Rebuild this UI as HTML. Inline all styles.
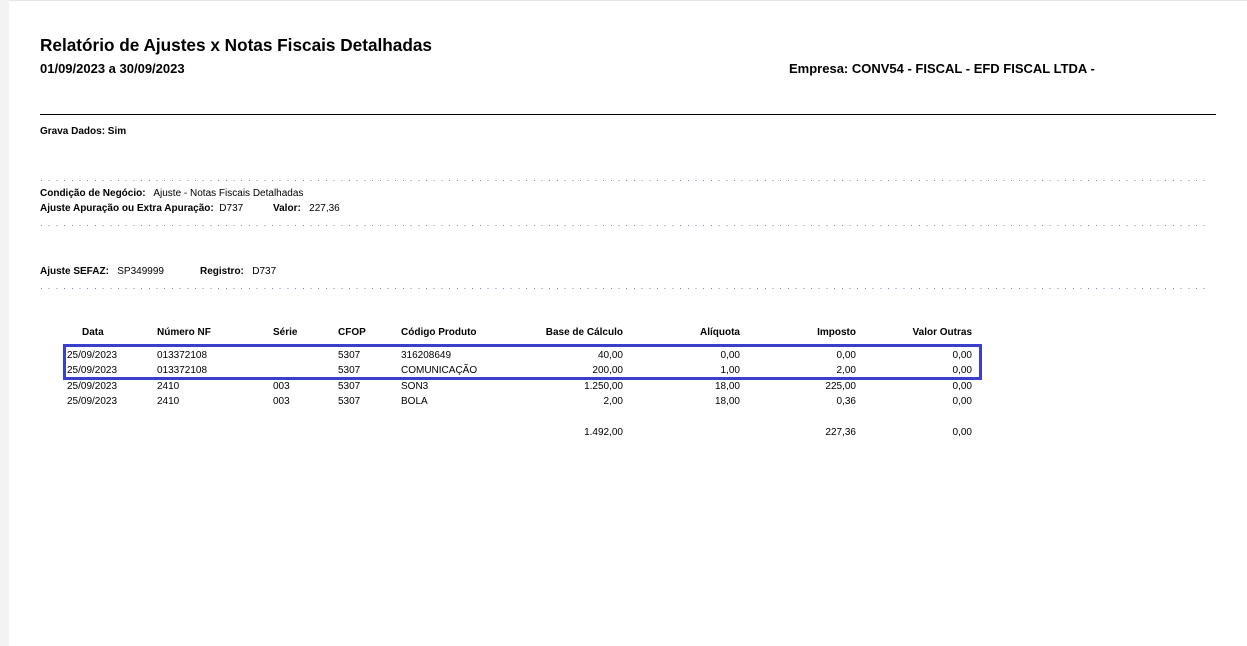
<!DOCTYPE html><html><head><meta charset="utf-8"><style>
body{margin:0;width:1247px;height:646px;background:#fff;font-family:"Liberation Sans",sans-serif;color:#000;position:relative;overflow:hidden}
.strip{position:absolute;left:0;top:0;width:9px;height:646px;background:#f3f3f3}
.a{position:absolute;white-space:nowrap;font-size:10px}
.b{font-weight:bold}
.dots{position:absolute;left:41px;width:1170px;height:1px;background-image:repeating-linear-gradient(90deg,#7b8fb8 0 1px,transparent 1px 7.7px)}
.r{text-align:right}
</style></head><body>
<div class="strip"></div>
<div style="position:absolute;left:9px;top:0;width:1238px;height:1px;background:#e6e6e6"></div>
<div class="a b" style="left:40px;top:35px;font-size:17.2px">Relatório de Ajustes x Notas Fiscais Detalhadas</div>
<div class="a b" style="left:40px;top:61px;font-size:13px">01/09/2023 a 30/09/2023</div>
<div class="a b" style="left:789px;top:61px;font-size:13px">Empresa: CONV54 - FISCAL - EFD FISCAL LTDA -</div>
<div style="position:absolute;left:40px;top:114px;width:1176px;height:1px;background:#000"></div>
<div class="a b" style="left:40px;top:126px">Grava Dados: Sim</div>
<div class="dots" style="top:180px"></div>
<div class="a" style="left:40px;top:188px"><b>Condição de Negócio:</b>&nbsp;&nbsp; Ajuste - Notas Fiscais Detalhadas</div>
<div class="a" style="left:40px;top:203px"><b>Ajuste Apuração ou Extra Apuração:</b>&nbsp; D737</div>
<div class="a" style="left:273px;top:203px"><b>Valor:</b>&nbsp;&nbsp; 227,36</div>
<div class="dots" style="top:225px"></div>
<div class="a" style="left:40px;top:266px"><b>Ajuste SEFAZ:</b>&nbsp;&nbsp; SP349999</div>
<div class="a" style="left:200px;top:266px"><b>Registro:</b>&nbsp;&nbsp; D737</div>
<div class="dots" style="top:288px"></div>
<div class="a b" style="left:82px;top:327px">Data</div>
<div class="a b" style="left:157px;top:327px">Número NF</div>
<div class="a b" style="left:273px;top:327px">Série</div>
<div class="a b" style="left:338px;top:327px">CFOP</div>
<div class="a b" style="left:401px;top:327px">Código Produto</div>
<div class="a b r" style="right:624px;top:327px">Base de Cálculo</div>
<div class="a b r" style="right:507px;top:327px">Alíquota</div>
<div class="a b r" style="right:391px;top:327px">Imposto</div>
<div class="a b r" style="right:275px;top:327px">Valor Outras</div>
<div style="position:absolute;left:63px;top:344px;width:913px;height:30px;border:3px solid #3a40cc"></div>
<div class="a" style="left:67px;top:350px">25/09/2023</div><div class="a" style="left:157px;top:350px">013372108</div><div class="a" style="left:338px;top:350px">5307</div><div class="a" style="left:401px;top:350px">316208649</div><div class="a r" style="right:624px;top:350px">40,00</div><div class="a r" style="right:507px;top:350px">0,00</div><div class="a r" style="right:391px;top:350px">0,00</div><div class="a r" style="right:275px;top:350px">0,00</div>
<div class="a" style="left:67px;top:365px">25/09/2023</div><div class="a" style="left:157px;top:365px">013372108</div><div class="a" style="left:338px;top:365px">5307</div><div class="a" style="left:401px;top:365px">COMUNICAÇÃO</div><div class="a r" style="right:624px;top:365px">200,00</div><div class="a r" style="right:507px;top:365px">1,00</div><div class="a r" style="right:391px;top:365px">2,00</div><div class="a r" style="right:275px;top:365px">0,00</div>
<div class="a" style="left:67px;top:381px">25/09/2023</div><div class="a" style="left:157px;top:381px">2410</div><div class="a" style="left:273px;top:381px">003</div><div class="a" style="left:338px;top:381px">5307</div><div class="a" style="left:401px;top:381px">SON3</div><div class="a r" style="right:624px;top:381px">1.250,00</div><div class="a r" style="right:507px;top:381px">18,00</div><div class="a r" style="right:391px;top:381px">225,00</div><div class="a r" style="right:275px;top:381px">0,00</div>
<div class="a" style="left:67px;top:396px">25/09/2023</div><div class="a" style="left:157px;top:396px">2410</div><div class="a" style="left:273px;top:396px">003</div><div class="a" style="left:338px;top:396px">5307</div><div class="a" style="left:401px;top:396px">BOLA</div><div class="a r" style="right:624px;top:396px">2,00</div><div class="a r" style="right:507px;top:396px">18,00</div><div class="a r" style="right:391px;top:396px">0,36</div><div class="a r" style="right:275px;top:396px">0,00</div>
<div class="a r" style="right:624px;top:427px">1.492,00</div><div class="a r" style="right:391px;top:427px">227,36</div><div class="a r" style="right:275px;top:427px">0,00</div>
</body></html>
